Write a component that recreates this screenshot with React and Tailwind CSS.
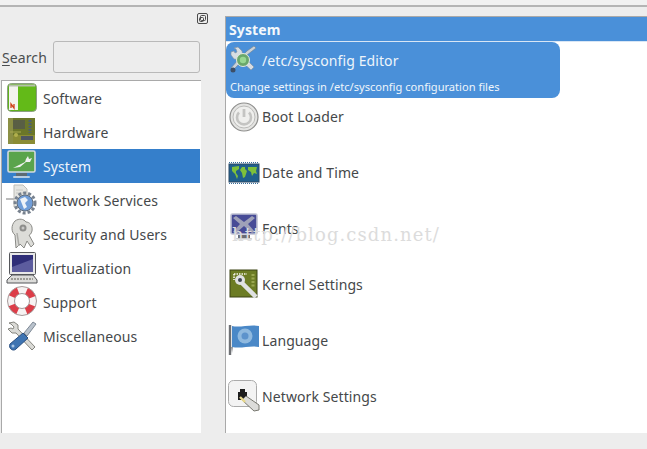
import React from 'react';

// Small hand drawn versions of the category icons
const SoftwareIcon = () => (
  <svg width="30" height="30" viewBox="0 0 30 30">
    <rect x="0.5" y="0.5" width="29" height="28" rx="4" fill="#5fb31c" stroke="#8d9f82" />
    <rect x="2" y="3" width="9" height="24" fill="#f3f3ee" />
    <rect x="11" y="3" width="17" height="24" fill="#63ba18" />
    <rect x="2" y="1.5" width="26" height="2" fill="#b5c0aa" />
    <path d="M4 25v-4l3 4v-4" fill="none" stroke="#d0421b" strokeWidth="1.3" />
  </svg>
);

const HardwareIcon = () => (
  <svg width="28" height="28" viewBox="0 0 28 28">
    <rect width="27" height="26" fill="#6b7629" />
    <rect y="17" width="27" height="9" fill="#8a8c35" />
    <rect x="0" y="0" width="5" height="26" fill="#8b8f45" />
    <path d="M6 2v9M8 2v9M10 2v9M12 2v9M14 2v9M16 2v9" stroke="#4d5058" strokeWidth="1.2" />
    <path d="M22 2v13" stroke="#4f6070" strokeWidth="3" strokeDasharray="2 1" />
    <rect x="13" y="18" width="12" height="4" fill="#4f5663" />
    <circle cx="8" cy="17" r="2" fill="#b1b04d" />
    <path d="M2 14h11" stroke="#a9aa50" />
  </svg>
);

const SystemIcon = () => (
  <svg width="32" height="32" viewBox="0 0 32 32">
    <rect x="2" y="1" width="27" height="21" rx="1.5" fill="#5aa44c" stroke="#d4dade" strokeWidth="1.6" />
    <path d="M7 18l7-1 6-5 4 0 2-4-3 1-1-3-2 3-1 3-6 3z" fill="#eef1ee" />
    <rect x="10" y="23" width="11" height="3" fill="#5d6b74" />
    <rect x="7" y="26" width="17" height="2" rx="1" fill="#b7cde3" />
  </svg>
);

const NetworkIcon = () => (
  <svg width="32" height="32" viewBox="0 0 32 32">
    <path d="M8 1h9l4 4v18H8z" fill="#e5e5e1" stroke="#bdbdb8" />
    <path d="M10 6h7M10 9h7" stroke="#c8c8c4" />
    <path d="M0 15h8" stroke="#bbbbbb" strokeWidth="2" />
    <circle cx="19" cy="19" r="10" fill="none" stroke="#77818e" strokeWidth="3" strokeDasharray="3 2" />
    <circle cx="19" cy="19" r="8" fill="#6f9dd8" stroke="#5d6b7c" />
    <path d="M14 15l5-2 3 3-3 3 2 4-3 2-2-5z" fill="#edf2f8" />
  </svg>
);

const SecurityIcon = () => (
  <svg width="32" height="32" viewBox="0 0 32 32">
    <path d="M10 30l-1-13C5 14 5 7 9 3c4-3 9-2 11 1 3 0 7 3 6 9-1 3-2 4-3 4l5 9-3 3-4-6-3 7-4-4z" fill="#dcdcd8" stroke="#8a8a86" />
    <circle cx="17" cy="10" r="3.5" fill="#8e8e8c" />
    <circle cx="17" cy="10" r="1.5" fill="#c8c8c6" />
    <path d="M11 15l2 13" stroke="#aaaaa6" strokeWidth="1.5" />
  </svg>
);

const VirtualIcon = () => (
  <svg width="32" height="32" viewBox="0 0 32 32">
    <rect x="3.5" y="0.5" width="26" height="22" rx="1" fill="#e8e8e8" stroke="#55565a" />
    <rect x="6" y="3" width="21" height="17" fill="#2f2e78" />
    <path d="M6 15l21-8v13H6z" fill="#5c5c9e" />
    <path d="M6 23h21l4 5v3H1v-3z" fill="#dcdcda" stroke="#55565a" />
    <path d="M5 27h22" stroke="#85857f" strokeWidth="1.5" strokeDasharray="2 1" />
  </svg>
);

const SupportIcon = () => (
  <svg width="32" height="32" viewBox="0 0 32 32">
    <circle cx="16" cy="15" r="11" fill="none" stroke="#f6f2f2" strokeWidth="7" />
    <circle cx="16" cy="15" r="11" fill="none" stroke="#dc3d48" strokeWidth="7" strokeDasharray="8.64 8.64" strokeDashoffset="-4.32" />
    <circle cx="16" cy="15" r="14.5" fill="none" stroke="#a59a9a" />
    <circle cx="16" cy="15" r="7.5" fill="none" stroke="#a59a9a" />
  </svg>
);

const MiscIcon = () => (
  <svg width="32" height="32" viewBox="0 0 32 32">
    <path d="M3 3l5-1 4 3 0 4 17 18-3 3L10 13l-4 0-4-4 3-1 2 1 1-2-3-3z" fill="#dadad6" stroke="#85857f" />
    <path d="M18 13l9-11 3 2-9 12z" fill="#b9c2cc" stroke="#7f8a96" />
    <path d="M17 13l5 5-12 11c-3 3-8-1-6-5z" fill="#3e74b2" stroke="#2a4f80" />
    <circle cx="7" cy="26" r="1.5" fill="#a9c4e4" />
  </svg>
);

const EditorIcon = () => (
  <svg width="28" height="28" viewBox="0 0 28 28">
    <path d="M2 6l3-1 1 2 2-1-1-3-2-1 4-1 4 4 1 5 11 11-3 3-11-10-6-1-3-4z" fill="#d7dde2" stroke="#7f8f9f" strokeWidth=".6" />
    <path d="M27 2l-9 7-8 9-6 6-2-2 7-8 9-9 7-5z" fill="#c9d1d8" stroke="#71818f" strokeWidth=".6" />
    <circle cx="14" cy="14" r="6.5" fill="#6aa86b" stroke="#e2e9e2" />
    <circle cx="14" cy="14" r="3.2" fill="#98d892" />
    <circle cx="4" cy="24" r="2.5" fill="#3d4f66" />
  </svg>
);

const BootIcon = () => (
  <svg width="30" height="30" viewBox="0 0 30 30">
    <circle cx="15" cy="15" r="14" fill="#e4e4e2" stroke="#8e8e8c" strokeWidth="1.2" />
    <circle cx="15" cy="15" r="11" fill="#efefed" stroke="#bbbbb9" />
    <path d="M10 10.5a7 7 0 1 0 10 0" fill="none" stroke="#c4c4c2" strokeWidth="2.6" />
    <path d="M15 7v8" stroke="#c4c4c2" strokeWidth="2.8" />
  </svg>
);

const DateIcon = () => (
  <svg width="32" height="24" viewBox="0 0 32 24">
    <rect x="1" y="3" width="30" height="18" fill="#1f5f8c" stroke="#2c4a66" />
    <path d="M1 1.5h30M1 22.5h30" stroke="#3a6f9c" strokeDasharray="1 1" />
    <path d="M4 6l7-1 0 3-3 2 0 2 2 3-1 3-2-5-3-3zM14 6h3l0 2 2 2-2 6-2 1-1-5-2-3zM20 6l9 0-1 4 1 3-3-1-2 3-1-4-3-2z" fill="#7dc03a" />
  </svg>
);

const FontsIcon = () => (
  <svg width="30" height="30" viewBox="0 0 30 30">
    <rect x="2" y="1" width="26" height="20" rx="1.5" fill="#474b96" stroke="#bfc1d2" strokeWidth="1.6" />
    <path d="M7 3l8 6 8-6 3 2-7 6 7 8-3 1-8-7-8 7-3-1 7-8-7-6z" fill="#9fa1b8" />
    <rect x="9" y="22" width="12" height="3" fill="#6b6c72" />
    <rect x="7" y="25" width="16" height="1.5" rx="0.7" fill="#c9c9c9" />
  </svg>
);

const KernelIcon = () => (
  <svg width="30" height="30" viewBox="0 0 30 30">
    <rect x="1" y="1" width="27" height="27" fill="#6c7c24" stroke="#3d4415" />
    <path d="M5 5h13M5 5v6" stroke="#f3f3ea" strokeWidth="1.6" strokeDasharray="1.5 1" />
    <path d="M24 5v14" stroke="#9aa74f" strokeWidth="3" strokeDasharray="2 1.5" />
    <circle cx="11" cy="11" r="5" fill="#dfe1e2" />
    <circle cx="11" cy="11" r="2" fill="#3f4650" />
    <path d="M13 14l14 14" stroke="#dfe1e2" strokeWidth="4.5" />
  </svg>
);

const LanguageIcon = () => (
  <svg width="32" height="32" viewBox="0 0 32 32">
    <path d="M2 1v30" stroke="#6e7074" strokeWidth="2.4" />
    <path d="M4 2c8 2 18-2 27 0v21c-9-2-17 2-27 0z" fill="#4a88c7" />
    <circle cx="17" cy="12" r="7.5" fill="#8fb9df" />
    <circle cx="17" cy="12" r="3.5" fill="#5d93cc" />
    <path d="M5 23l-1 6-1-6z" fill="#8d8f92" />
  </svg>
);

const NetSettingsIcon = () => (
  <svg width="32" height="32" viewBox="0 0 32 32">
    <rect x="0.5" y="0.5" width="28" height="26" rx="5" fill="#f3f3f3" stroke="#aaaaaa" />
    <path d="M12 9h5v3h2v8h-9v-8h2z" fill="#1d1d1d" />
    <path d="M14 20l4-4 13 9v5l-5 1z" fill="#dcdcda" stroke="#77776f" />
    <path d="M12 17l5 5" stroke="#e8d88a" strokeWidth="2.4" />
  </svg>
);

const categories = [
  { name: 'Software', icon: SoftwareIcon },
  { name: 'Hardware', icon: HardwareIcon },
  { name: 'System', icon: SystemIcon, active: true },
  { name: 'Network Services', icon: NetworkIcon },
  { name: 'Security and Users', icon: SecurityIcon },
  { name: 'Virtualization', icon: VirtualIcon },
  { name: 'Support', icon: SupportIcon },
  { name: 'Miscellaneous', icon: MiscIcon },
];

const modules = [
  { name: 'Boot Loader', icon: BootIcon },
  { name: 'Date and Time', icon: DateIcon },
  { name: 'Fonts', icon: FontsIcon },
  { name: 'Kernel Settings', icon: KernelIcon },
  { name: 'Language', icon: LanguageIcon },
  { name: 'Network Settings', icon: NetSettingsIcon },
];

const App = () => {
  return (
    <div className="relative w-[647px] h-[449px] overflow-hidden bg-[#ededed] text-[14px] tracking-[0.1px] text-[#45484a] font-['Noto_Sans',sans-serif]">
      <div className="h-[7px] bg-[#f1f1f1] border-b-2 border-[#b4b4b4]" />

      <div className="flex h-[426px]">
        {/* Left column */}
        <div className="w-[225px] shrink-0 pl-[1px] flex flex-col">
          <div className="w-[200px] h-[29px] flex justify-end pt-[6px]">
            <svg width="11" height="11" viewBox="0 0 11 11" className="mr-[-7px]" fill="none" stroke="#4a4a4a">
              <rect x="0.5" y="0.5" width="10" height="10" rx="1.5" />
              <rect x="3.5" y="2.5" width="5" height="5" rx="1" />
              <rect x="2.5" y="4.5" width="4" height="4" rx="1" />
            </svg>
          </div>
          <div className="flex items-center w-[200px] h-[32px] mt-[5px]">
            <span className="ml-[1px] text-[#4a4d4f]"><span className="underline underline-offset-2">S</span>earch</span>
            <div className="w-[147px] h-[32px] ml-auto mr-[1px] rounded-[3px] border border-[#b9b9b9] bg-[#ededed]" />
          </div>
          <div className="mt-[7px] w-[200px] h-[353px] bg-white border-l border-t border-[#a9a9a9] pr-[1px]">
            {categories.map((cat) => {
              const Icon = cat.icon;
              return (
                <div
                  key={cat.name}
                  className={`flex items-center h-[34px] ${cat.active ? 'bg-[#357fcb] text-[#eef5fb]' : ''}`}
                >
                  <span className="w-[41px] shrink-0 flex items-center justify-center pr-[2px]">
                    <Icon />
                  </span>
                  <span>{cat.name}</span>
                </div>
              );
            })}
          </div>
        </div>

        {/* Right column */}
        <div className="flex-1 mt-[9px] bg-white border-l border-t border-[#a9a9a9] flex flex-col">
          <div className="h-[23px] bg-[#4a90d9] text-[#f4f8fc] font-bold pl-[3px] pt-[1px] flex items-center border-b border-[#d8e6f5] box-content">
            System
          </div>
          <div className="w-[334px] h-[56px] bg-[#4a90d9] text-[#eef5fb] rounded-[8px] pl-[4px]">
            <div className="flex items-center h-[37px] gap-[5px]">
              <span className="-ml-[1px] mt-[-1px]"><EditorIcon /></span>
              <span>/etc/sysconfig Editor</span>
            </div>
            <div className="text-[11.1px] leading-[16px] tracking-normal">Change settings in /etc/sysconfig configuration files</div>
          </div>
          {modules.map((mod) => {
            const Icon = mod.icon;
            return (
              <div key={mod.name} className="flex items-center h-[56px] pl-[2px] pb-[18px]">
                <span className="w-[32px] h-[32px] flex items-center justify-center shrink-0">
                  <Icon />
                </span>
                <span className="ml-[2px]">{mod.name}</span>
              </div>
            );
          })}
        </div>
      </div>

      {/* csdn watermark */}
      <div className="absolute left-[232px] top-[223px] text-[18px] leading-[24px] tracking-[1.1px] text-[#dcdcdc] font-['DejaVu_Serif',serif] pointer-events-none">
        http://blog.csdn.net/
      </div>
    </div>
  );
};

export default App;
